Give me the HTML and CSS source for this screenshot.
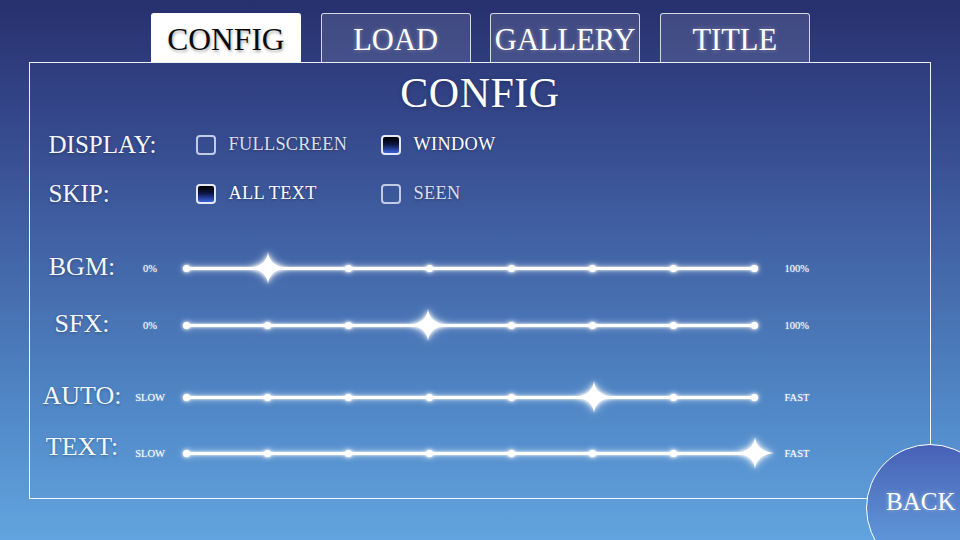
FILE: index.html
```html
<!DOCTYPE html>
<html>
<head>
<meta charset="utf-8">
<link rel="stylesheet" href="styles.css">
</head>
<body>
<div class="screen">
  <div class="tabs">
    <div class="tab active"><span>CONFIG</span></div>
    <div class="tab"><span>LOAD</span></div>
    <div class="tab"><span>GALLERY</span></div>
    <div class="tab"><span>TITLE</span></div>
  </div>
  <div class="panel">
    <h1 class="title">CONFIG</h1>
    <div class="opt-row">
      <div class="opt-label">DISPLAY:</div>
      <div class="opt"><span class="box"></span><span class="opt-text">FULLSCREEN</span></div>
      <div class="opt on"><span class="box"></span><span class="opt-text">WINDOW</span></div>
    </div>
    <div class="opt-row">
      <div class="opt-label">SKIP:</div>
      <div class="opt on"><span class="box"></span><span class="opt-text">ALL TEXT</span></div>
      <div class="opt"><span class="box"></span><span class="opt-text">SEEN</span></div>
    </div>

    <div class="slider-group first">
      <div class="slider-row">
        <div class="s-label">BGM:</div>
        <div class="s-min">0%</div>
        <div class="s-track">
          <i class="dot" style="left:0%"></i><i class="dot" style="left:14.286%"></i><i class="dot" style="left:28.571%"></i><i class="dot" style="left:42.857%"></i><i class="dot" style="left:57.143%"></i><i class="dot" style="left:71.429%"></i><i class="dot" style="left:85.714%"></i><i class="dot" style="left:100%"></i>
          <svg class="thumb" style="left:14.29%" viewBox="-20 -17 40 34"><path d="M0,-16 Q1.6,-2 19,0 Q1.6,2 0,16 Q-1.6,2 -19,0 Q-1.6,-2 0,-16 Z"/></svg>
        </div>
        <div class="s-max">100%</div>
      </div>
      <div class="slider-row">
        <div class="s-label">SFX:</div>
        <div class="s-min">0%</div>
        <div class="s-track">
          <i class="dot" style="left:0%"></i><i class="dot" style="left:14.286%"></i><i class="dot" style="left:28.571%"></i><i class="dot" style="left:42.857%"></i><i class="dot" style="left:57.143%"></i><i class="dot" style="left:71.429%"></i><i class="dot" style="left:85.714%"></i><i class="dot" style="left:100%"></i>
          <svg class="thumb" style="left:42.43%" viewBox="-20 -17 40 34"><path d="M0,-16 Q1.6,-2 19,0 Q1.6,2 0,16 Q-1.6,2 -19,0 Q-1.6,-2 0,-16 Z"/></svg>
        </div>
        <div class="s-max">100%</div>
      </div>
    </div>

    <div class="slider-group second">
      <div class="slider-row">
        <div class="s-label">AUTO:</div>
        <div class="s-min">SLOW</div>
        <div class="s-track">
          <i class="dot" style="left:0%"></i><i class="dot" style="left:14.286%"></i><i class="dot" style="left:28.571%"></i><i class="dot" style="left:42.857%"></i><i class="dot" style="left:57.143%"></i><i class="dot" style="left:71.429%"></i><i class="dot" style="left:85.714%"></i><i class="dot" style="left:100%"></i>
          <svg class="thumb" style="left:71.83%" viewBox="-20 -17 40 34"><path d="M0,-16 Q1.6,-2 19,0 Q1.6,2 0,16 Q-1.6,2 -19,0 Q-1.6,-2 0,-16 Z"/></svg>
        </div>
        <div class="s-max">FAST</div>
      </div>
      <div class="slider-row">
        <div class="s-label up">TEXT:</div>
        <div class="s-min">SLOW</div>
        <div class="s-track">
          <i class="dot" style="left:0%"></i><i class="dot" style="left:14.286%"></i><i class="dot" style="left:28.571%"></i><i class="dot" style="left:42.857%"></i><i class="dot" style="left:57.143%"></i><i class="dot" style="left:71.429%"></i><i class="dot" style="left:85.714%"></i><i class="dot" style="left:100%"></i>
          <svg class="thumb" style="left:100%" viewBox="-20 -17 40 34"><path d="M0,-16 Q1.6,-2 19,0 Q1.6,2 0,16 Q-1.6,2 -19,0 Q-1.6,-2 0,-16 Z"/></svg>
        </div>
        <div class="s-max">FAST</div>
      </div>
    </div>
  </div>
  <div class="back">BACK</div>
</div>
</body>
</html>
```
FILE: styles.css
```css
* { box-sizing: border-box; }
html, body { margin: 0; padding: 0; }
body {
  font-family: "Liberation Serif", "DejaVu Serif", serif;
  color: #f4f6fc;
}
.screen {
  position: relative;
  width: 960px;
  height: 540px;
  overflow: hidden;
  background: linear-gradient(180deg, #28306e 0%, #34478a 22%, #4366a8 48%, #5087c6 75%, #62a4df 100%);
}
.tabs {
  display: flex;
  gap: 19.6px;
  height: 62px;
  padding: 13px 0 0 151px;
}
.tab {
  width: 150px;
  height: 49px;
  border: 1px solid rgba(255,255,255,0.78);
  border-bottom: none;
  border-radius: 3px 3px 0 0;
  background: rgba(255,255,255,0.11);
  display: flex;
  align-items: center;
  justify-content: center;
  font-size: 30.5px;
  color: #fff;
  text-shadow: 0 0 4px rgba(255,255,255,0.35);
  padding-top: 4px;
}
.tab.active {
  background: #fff;
  border-color: #fff;
  color: #0a0a0a;
  font-size: 31.5px;
  text-shadow: 1px 2px 3px rgba(0,0,0,0.35);
}
.panel {
  margin-left: 29px;
  width: 902px;
  height: 437px;
  border: 1.5px solid rgba(255,255,255,0.92);
}
.title {
  margin: 0;
  padding-top: 5px;
  height: 57px;
  line-height: 50px;
  text-align: center;
  font-weight: normal;
  font-size: 42px;
  letter-spacing: 0.5px;
  color: #fff;
  text-shadow: 0 1px 4px rgba(0,0,0,0.3);
}
.opt-row {
  display: flex;
  align-items: center;
  height: 49px;
  padding-left: 18.5px;
}
.opt-label {
  width: 147px;
  font-size: 25px;
  text-shadow: 0 1px 3px rgba(0,0,0,0.3);
}
.opt {
  width: 185px;
  display: flex;
  align-items: center;
}
.box {
  width: 20px;
  height: 20px;
  border: 2px solid #c3cbe4;
  border-radius: 4px;
  margin-right: 13px;
}
.opt.on .box {
  border-color: #e4e8f6;
  background: linear-gradient(180deg, #000 0%, #0c1640 45%, #3b62dc 100%);
}
.opt-text {
  font-size: 18.3px;
  letter-spacing: 0.3px;
  color: #d9deee;
  text-shadow: 0 1px 3px rgba(0,0,0,0.3);
}
.opt.on .opt-text { color: #fff; }
.slider-group {
  display: flex;
  flex-direction: column;
}
.slider-group.first { margin-top: 30px; gap: 17px; }
.slider-group.second { margin-top: 32px; gap: 16px; }
.slider-row {
  display: flex;
  align-items: center;
  height: 40px;
}
.s-label {
  width: 104px;
  display: flex;
  justify-content: center;
  font-size: 26px;
  margin-bottom: 3px;
  text-shadow: 0 1px 3px rgba(0,0,0,0.3);
}
.s-label.up { margin-bottom: 12px; }
.s-min {
  width: 32px;
  text-align: center;
  font-size: 10.5px;
  color: #fff;
  text-shadow: 0 0 2px rgba(255,255,255,0.5);
}
.s-track {
  position: relative;
  margin-left: 20.5px;
  width: 568px;
  height: 3px;
  background: #fff;
  border-radius: 2px;
  box-shadow: 0 0 3px #fff, 0 0 7px rgba(255,255,255,0.7);
}
.dot {
  position: absolute;
  top: 50%;
  width: 7px;
  height: 7px;
  margin: -3.5px 0 0 -3.5px;
  border-radius: 50%;
  background: #fff;
  box-shadow: 0 0 3px #fff, 0 0 6px rgba(255,255,255,0.8);
}
.thumb {
  position: absolute;
  top: 50%;
  width: 40px;
  height: 34px;
  margin: -17px 0 0 -20px;
  fill: #fff;
  filter: drop-shadow(0 0 2px #fff) drop-shadow(0 0 4px rgba(255,255,255,0.7));
}
.s-max {
  margin-left: 30px;
  font-size: 10.5px;
  color: #fff;
  text-shadow: 0 0 2px rgba(255,255,255,0.5);
}
.back {
  position: absolute;
  left: 866px;
  top: 444px;
  width: 128px;
  height: 128px;
  border-radius: 50%;
  border: 1.5px solid #fff;
  background: linear-gradient(180deg, #4760b6 0%, #5379c4 35%, #5d92d6 70%, #62a0dd 100%);
  padding: 43px 0 0 19px;
  font-size: 25px;
  line-height: 28px;
  color: #fff;
  text-shadow: 0 0 4px rgba(255,255,255,0.4);
}
```
